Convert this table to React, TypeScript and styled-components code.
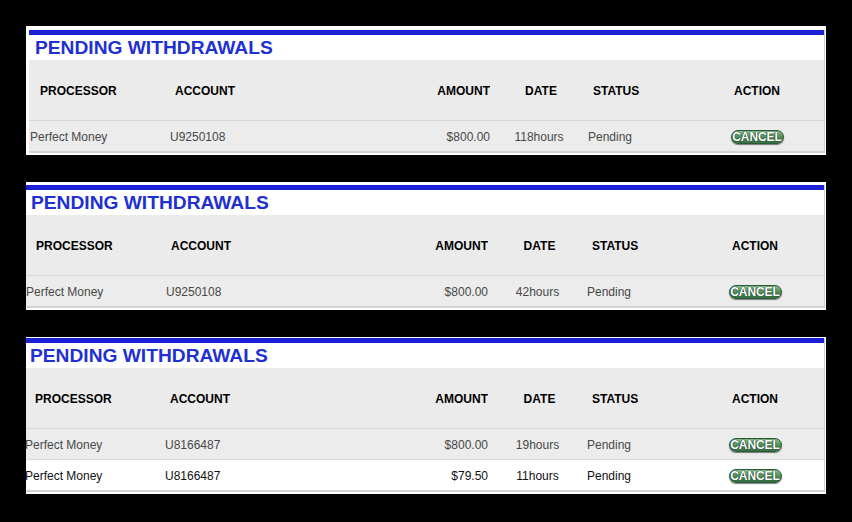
import styled, { createGlobalStyle } from "styled-components"

const GlobalStyle = createGlobalStyle`
  html, body {
    margin: 0;
    padding: 0;
    background: #000;
  }
  body {
    font-family: "Liberation Sans", Arial, sans-serif;
    width: 852px;
    height: 522px;
    overflow: hidden;
  }
`

const StyledPage = styled.main`
  display: flex;
  flex-direction: column;
  gap: 27px;
  padding: 26px 0 0 26px;
`

const StyledPanel = styled.section<{ $inset: number; $top: number }>`
  width: 800px;
  box-sizing: border-box;
  background: #fff;
  padding: ${p => p.$top}px 2px 2px ${p => p.$inset}px;
  overflow: hidden;
`

const StyledBox = styled.div`
  border-top: 5px solid #1b1fd6;
  box-shadow: 1px 0 0 #cfcfcf;
  border-bottom: 2px solid #d3d3d3;
`

const StyledTitle = styled.h2<{ $shift: number }>`
  margin: 0;
  height: 25px;
  padding-left: ${p => 6 + p.$shift}px;
  font-size: 19.2px;
  line-height: 26px;
  font-weight: bold;
  color: #2130d2;
  background: #fff;
`

const StyledGrid = styled.div<{ $shift: number; $cols: string }>`
  display: grid;
  grid-template-columns: ${p => p.$cols};
  margin-left: ${p => p.$shift}px;
  align-items: center;
`

const StyledHeadRow = styled.div`
  display: contents;

  > span {
    height: 60px;
    line-height: 62px;
    background: #ebebeb;
    border-bottom: 1px solid #d6d6d6;
    font-size: 12px;
    font-weight: bold;
    color: #000;
  }
`

const StyledRow = styled.div<{ $odd: boolean }>`
  display: contents;

  > span {
    height: 30px;
    line-height: 32px;
    background: ${p => (p.$odd ? "#ececec" : "#fff")};
    color: ${p => (p.$odd ? "#484848" : "#111")};
    font-size: 12px;
    border-bottom: 1px solid #d8d8d8;
  }
  &:last-child > span {
    border-bottom: none;
  }
`

const StyledCell = styled.span<{ $align?: string; $pad?: number; $padRight?: number }>`
  display: block;
  text-align: ${p => p.$align ?? "left"};
  padding-left: ${p => p.$pad ?? 0}px;
  padding-right: ${p => p.$padRight ?? 0}px;
  white-space: nowrap;
`

const StyledCancel = styled.button`
  display: inline-block;
  vertical-align: middle;
  width: 53px;
  height: 14px;
  padding: 0;
  margin-top: -2px;
  border: 1px solid #2a5a34;
  border-radius: 7px;
  background: linear-gradient(#8cc096, #55935f 45%, #386f45);
  box-shadow: 0 1px 1px rgba(0, 0, 0, 0.5);
  color: #fff;
  font-family: "Liberation Sans", Arial, sans-serif;
  font-size: 12px;
  font-weight: bold;
  line-height: 12px;
  letter-spacing: -0.1px;
  text-shadow: 0 0 1px #0c2a14, 0 0 1px #0c2a14;
  cursor: pointer;
`

interface Withdrawal {
  account: string
  amount: string
  date: string
}

interface PanelProps {
  rows: Withdrawal[]
  inset: number
  top: number
  shift: number
  cols: string
}

function PendingPanel({ rows, inset, top, shift, cols }: PanelProps) {
  return (
    <StyledPanel $inset={inset} $top={top}>
      <StyledBox>
        <StyledTitle $shift={shift}>PENDING WITHDRAWALS</StyledTitle>
        <StyledGrid $shift={shift} $cols={cols}>
          <StyledHeadRow>
            <StyledCell $pad={11}>PROCESSOR</StyledCell>
            <StyledCell $pad={5}>ACCOUNT</StyledCell>
            <StyledCell $align="right">AMOUNT</StyledCell>
            <StyledCell $align="center" $pad={4}>DATE</StyledCell>
            <StyledCell $pad={5}>STATUS</StyledCell>
            <StyledCell $align="center" $padRight={10}>ACTION</StyledCell>
          </StyledHeadRow>
          {rows.map((r, i) => (
            <StyledRow key={i} $odd={i % 2 === 0}>
              <StyledCell $pad={1}>Perfect Money</StyledCell>
              <StyledCell>{r.account}</StyledCell>
              <StyledCell $align="right">{r.amount}</StyledCell>
              <StyledCell $align="center">{r.date}</StyledCell>
              <StyledCell>Pending</StyledCell>
              <StyledCell $align="center" $padRight={10}>
                <StyledCancel>CANCEL</StyledCancel>
              </StyledCell>
            </StyledRow>
          ))}
        </StyledGrid>
      </StyledBox>
    </StyledPanel>
  )
}

export default function App() {
  return (
    <StyledPage>
      <GlobalStyle />
      <PendingPanel inset={3} top={4} shift={0} cols="141px 230px 90px 98px 112px 1fr" rows={[
        { account: "U9250108", amount: "$800.00", date: "118hours" },
      ]} />
      <PendingPanel inset={0} top={3} shift={-1} cols="141px 232px 90px 99px 109px 1fr" rows={[
        { account: "U9250108", amount: "$800.00", date: "42hours" },
      ]} />
      <PendingPanel inset={0} top={1} shift={-2} cols="141px 233px 90px 99px 109px 1fr" rows={[
        { account: "U8166487", amount: "$800.00", date: "19hours" },
        { account: "U8166487", amount: "$79.50", date: "11hours" },
      ]} />
    </StyledPage>
  )
}
